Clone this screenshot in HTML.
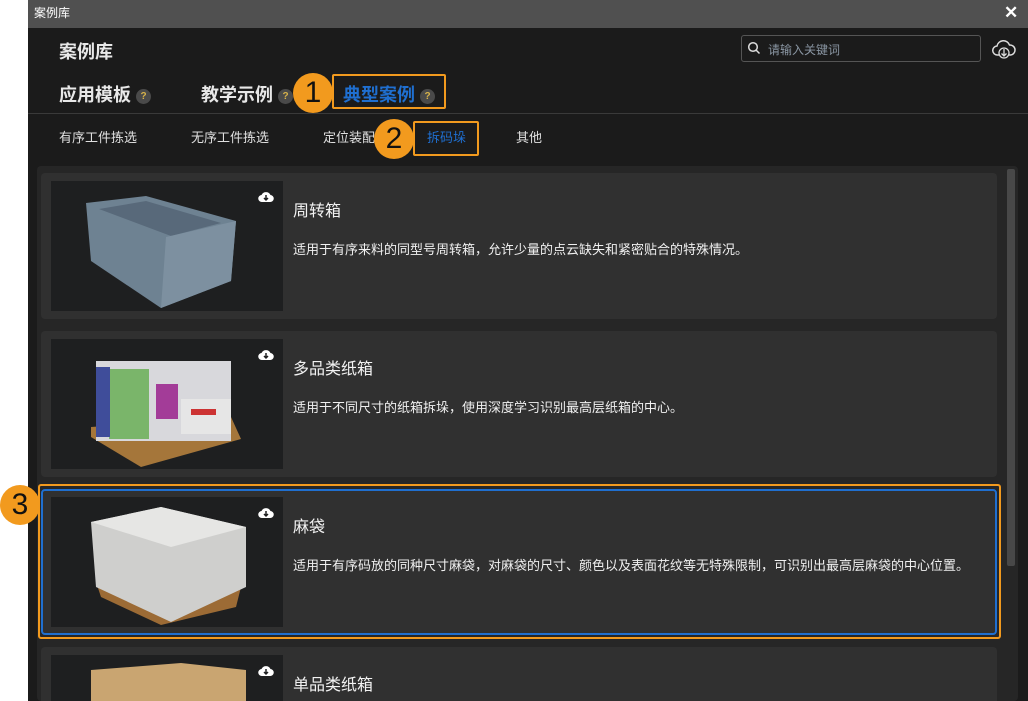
<!DOCTYPE html>
<html style="width:1028px;height:701px;overflow:hidden"><head><meta charset="utf-8"><style>
*{margin:0;padding:0;box-sizing:border-box}
body{width:1028px;height:701px;overflow:hidden;background:#fff;font-family:"Liberation Sans","Noto Sans CJK SC",sans-serif;position:relative}
.a{position:absolute}
.win{left:28px;top:0;width:1000px;height:701px;background:#1b1b1b}
.tb{left:28px;top:0;width:1000px;height:28px;background:#505050;color:#fff;font-size:12px;line-height:26px;padding-left:6px}
.q{display:inline-block;width:15px;height:15px;border-radius:50%;background:#4a4a4a;color:#d6b24a;font-size:10px;line-height:15px;text-align:center;font-weight:bold;vertical-align:middle}
.big{font-size:18px;font-weight:bold;color:#e8e8e8}
.sub{font-size:13px;color:#e0e0e0}
.circ{width:40px;height:40px;border-radius:50%;background:#f29a1e;color:#111;font-size:30px;line-height:40px;text-align:center}
.card{left:41px;width:956px;height:146px;background:#303030;border-radius:4px;overflow:hidden}
.img{position:absolute;left:10px;top:8px;width:232px;height:130px;background:#1e1f20;overflow:hidden}
.t{position:absolute;left:252px;top:24px;font-size:16px;color:#f2f2f2}
.d{position:absolute;left:252px;top:66px;font-size:13px;color:#f0f0f0}
.dl{position:absolute;left:207px;top:9px}
</style></head><body>
<div class="a win"></div>
<div class="a tb">案例库</div>
<div class="a" style="left:1004px;top:3px;color:#fff;font-size:17px;font-weight:bold">✕</div>
<div class="a big" style="left:59px;top:38px;font-size:18px">案例库</div>
<div class="a" style="left:741px;top:35px;width:240px;height:27px;border:1px solid #555;border-radius:3px;"></div>
<svg class="a" style="left:747px;top:41px" width="14" height="14" viewBox="0 0 14 14"><circle cx="6" cy="6" r="4.3" fill="none" stroke="#ddd" stroke-width="1.5"/><path d="M9 9l3.5 3.5" stroke="#ddd" stroke-width="1.5"/></svg>
<div class="a" style="left:768px;top:41px;font-size:12px;color:#8a96a3">请输入关键词</div>
<svg class="a" style="left:992px;top:38px" width="24" height="22" viewBox="0 0 24 22"><path d="M7 17H5.5A4.5 4.5 0 0 1 5 8a6.5 6.5 0 0 1 12.5-1A5 5 0 0 1 18.5 17H17" fill="none" stroke="#ddd" stroke-width="1.5"/><circle cx="12" cy="15" r="5" fill="none" stroke="#ddd" stroke-width="1.3"/><path d="M12 11v7M9.5 15.5l2.5 2.5 2.5-2.5" fill="none" stroke="#ddd" stroke-width="1.3"/></svg>
<div class="a big" style="left:59px;top:81px">应用模板 <span class="q">?</span></div>
<div class="a big" style="left:201px;top:81px">教学示例 <span class="q">?</span></div>
<div class="a" style="left:332px;top:74px;width:114px;height:35px;border:2px solid #f29a1e;border-radius:2px"></div>
<div class="a big" style="left:343px;top:81px;color:#1f6fd0">典型案例 <span class="q">?</span></div>
<div class="a circ" style="left:293px;top:73px">1</div>
<div class="a" style="left:28px;top:113px;width:1000px;height:1px;background:#3a3a3a"></div>
<div class="a sub" style="left:59px;top:127px">有序工件拣选</div>
<div class="a sub" style="left:191px;top:127px">无序工件拣选</div>
<div class="a sub" style="left:323px;top:127px">定位装配</div>
<div class="a" style="left:413px;top:121px;width:66px;height:35px;border:2px solid #f29a1e;border-radius:2px"></div>
<div class="a sub" style="left:427px;top:127px;color:#1f6fd0">拆码垛</div>
<div class="a circ" style="left:374px;top:119px">2</div>
<div class="a sub" style="left:516px;top:127px">其他</div>
<div class="a" style="left:37px;top:166px;width:981px;height:535px;background:#262626;border-radius:4px"></div>
<div class="a" style="left:1007px;top:169px;width:8px;height:397px;background:#484848;border-radius:2px"></div>

<div class="a card" style="top:173px"><div class="img">
<svg width="232" height="130"><polygon points="35,22 95,15 185,40 180,100 110,127 40,80" fill="#6e8292"/><polygon points="48,28 95,20 170,42 120,55" fill="#58697a"/><polygon points="115,56 185,40 180,100 110,127" fill="#7d90a0"/></svg>
<svg class="dl" width="16" height="14" viewBox="0 0 16 14"><path d="M4 12a3.5 3.5 0 0 1-.5-7A5 5 0 0 1 12.5 5 3.5 3.5 0 0 1 12 12z" fill="#fff"/><path d="M8 5v5M6 8l2 2 2-2" stroke="#1e1f20" stroke-width="1.5" fill="none"/></svg></div><div class="t">周转箱</div><div class="d">适用于有序来料的同型号周转箱，允许少量的点云缺失和紧密贴合的特殊情况。</div></div>

<div class="a card" style="top:331px"><div class="img">
<svg width="232" height="130"><polygon points="40,88 180,78 190,100 90,128 40,98" fill="#a5763a"/><rect x="45" y="22" width="135" height="80" fill="#d8d8dc"/><rect x="58" y="30" width="40" height="70" fill="#7ab56a"/><rect x="45" y="28" width="14" height="70" fill="#3f4d9a"/><rect x="105" y="45" width="22" height="35" fill="#a33c98"/><rect x="130" y="60" width="50" height="35" fill="#e6e6e6"/><rect x="140" y="70" width="25" height="6" fill="#c33"/></svg>
<svg class="dl" width="16" height="14" viewBox="0 0 16 14"><path d="M4 12a3.5 3.5 0 0 1-.5-7A5 5 0 0 1 12.5 5 3.5 3.5 0 0 1 12 12z" fill="#fff"/><path d="M8 5v5M6 8l2 2 2-2" stroke="#1e1f20" stroke-width="1.5" fill="none"/></svg></div><div class="t">多品类纸箱</div><div class="d">适用于不同尺寸的纸箱拆垛，使用深度学习识别最高层纸箱的中心。</div></div>

<div class="a" style="left:38px;top:484px;width:963px;height:155px;border:2px solid #f29a1e;border-radius:3px"></div>
<div class="a card" style="top:489px;border:2px solid #1f6fd0"><div class="img" style="left:8px;top:6px">
<svg width="232" height="130"><polygon points="45,85 190,90 185,110 110,128 50,100" fill="#9c6b35"/><polygon points="40,25 110,10 195,30 195,90 120,125 45,90" fill="#cfcfcd"/><polygon points="40,25 110,10 195,30 120,50" fill="#e6e6e4"/></svg>
<svg class="dl" width="16" height="14" viewBox="0 0 16 14"><path d="M4 12a3.5 3.5 0 0 1-.5-7A5 5 0 0 1 12.5 5 3.5 3.5 0 0 1 12 12z" fill="#fff"/><path d="M8 5v5M6 8l2 2 2-2" stroke="#1e1f20" stroke-width="1.5" fill="none"/></svg></div><div class="t" style="left:250px;top:22px">麻袋</div><div class="d" style="left:250px;top:64px">适用于有序码放的同种尺寸麻袋，对麻袋的尺寸、颜色以及表面花纹等无特殊限制，可识别出最高层麻袋的中心位置。</div></div>
<div class="a circ" style="left:0px;top:485px">3</div>

<div class="a card" style="top:647px;height:54px;border-radius:4px 4px 0 0"><div class="img" style="height:46px">
<svg width="232" height="130"><polygon points="40,15 130,8 195,15 195,60 40,60" fill="#c9a571"/></svg>
<svg class="dl" width="16" height="14" viewBox="0 0 16 14"><path d="M4 12a3.5 3.5 0 0 1-.5-7A5 5 0 0 1 12.5 5 3.5 3.5 0 0 1 12 12z" fill="#fff"/><path d="M8 5v5M6 8l2 2 2-2" stroke="#1e1f20" stroke-width="1.5" fill="none"/></svg></div><div class="t">单品类纸箱</div></div>
</body></html>
